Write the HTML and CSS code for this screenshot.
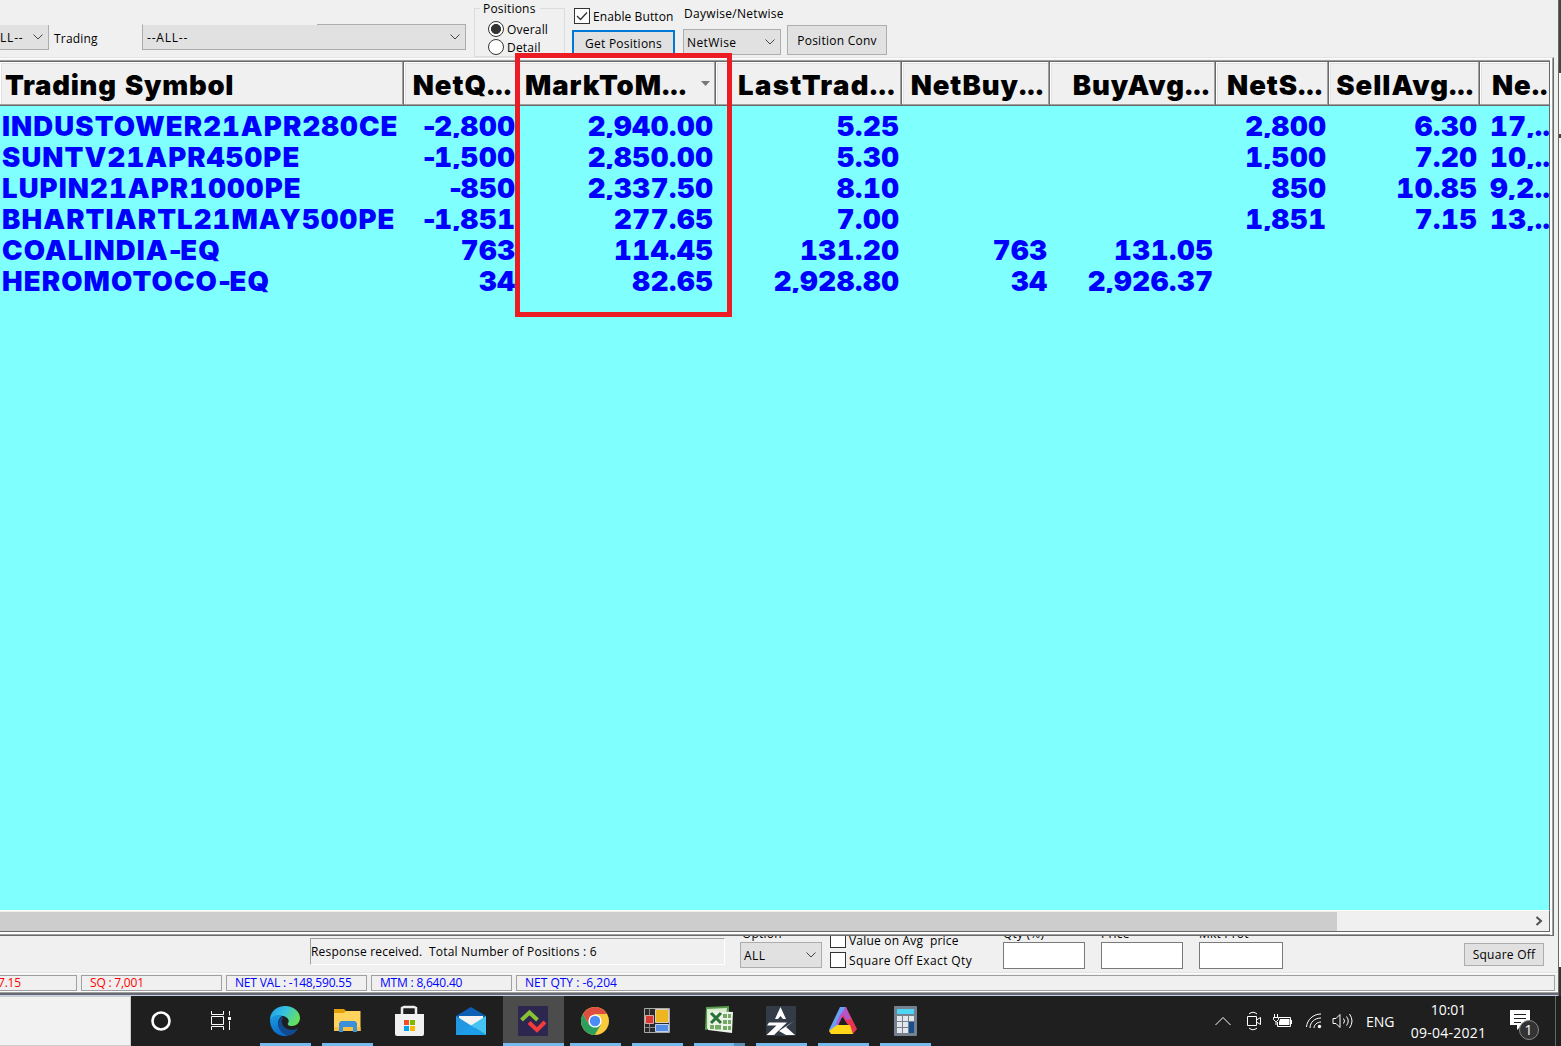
FILE: index.html
```html
<!DOCTYPE html>
<html lang="en">
<head>
    <meta charset="UTF-8">
    <title>Net Positions</title>
    <link rel="stylesheet" href="styles.css">
</head>
<body>
    <div class="window">
        <div class="toolbar">
            <div class="select cut-left"><span>LL--</span><svg class="chev" viewBox="0 0 10 6"><path d="M0.5 0.5 5 5 9.5 0.5"/></svg></div>
            <label class="trading">Trading</label>
            <div class="select symbol-select"><span>--ALL--</span><svg class="chev" viewBox="0 0 10 6"><path d="M0.5 0.5 5 5 9.5 0.5"/></svg></div>
            <div class="group">
                <div class="legend"><span>Positions</span></div>
                <div class="radio"><i class="dot on"></i><span>Overall</span></div>
                <div class="radio"><i class="dot"></i><span>Detail</span></div>
            </div>
            <div class="get-col">
                <div class="check"><i class="box"><svg viewBox="0 0 14 14"><path d="M2 7 5.500 10.500 12 3.500"/></svg></i><span>Enable Button</span></div>
                <div class="button primary"><span>Get Positions</span></div>
            </div>
            <div class="wise-col">
                <label><span>Daywise/Netwise</span></label>
                <div class="select"><span>NetWise</span><svg class="chev" viewBox="0 0 10 6"><path d="M0.5 0.5 5 5 9.5 0.5"/></svg></div>
            </div>
            <div class="button conv"><span>Position Conv</span></div>
        </div>

        <div class="list">
            <table class="positions">
                <thead>
                    <tr>
                        <th class="left"><span>Trading Symbol</span></th>
                        <th><span>NetQ...</span></th>
                        <th class="sorted"><span>MarkToM...</span><i class="arrow"></i></th>
                        <th class="ltp"><span>LastTrad...</span></th>
                        <th><span>NetBuy...</span></th>
                        <th><span>BuyAvg...</span></th>
                        <th><span>NetS...</span></th>
                        <th><span>SellAvg...</span></th>
                        <th class="last"><span>Ne...</span></th>
                    </tr>
                </thead>
                <tbody>
                    <tr><td>INDUSTOWER21APR280CE</td><td><i>-</i>2,800</td><td>2,940.00</td><td>5.25</td><td></td><td></td><td>2,800</td><td>6.30</td><td>17,...</td></tr>
                    <tr><td>SUNTV21APR450PE</td><td><i>-</i>1,500</td><td>2,850.00</td><td>5.30</td><td></td><td></td><td>1,500</td><td>7.20</td><td>10,...</td></tr>
                    <tr><td>LUPIN21APR1000PE</td><td><i>-</i>850</td><td>2,337.50</td><td>8.10</td><td></td><td></td><td>850</td><td>10.85</td><td>9,2...</td></tr>
                    <tr><td>BHARTIARTL21MAY500PE</td><td><i>-</i>1,851</td><td>277.65</td><td>7.00</td><td></td><td></td><td>1,851</td><td>7.15</td><td>13,...</td></tr>
                    <tr><td>COALINDIA<i>-</i>EQ</td><td>763</td><td>114.45</td><td>131.20</td><td>763</td><td>131.05</td><td></td><td></td><td></td></tr>
                    <tr><td>HEROMOTOCO<i>-</i>EQ</td><td>34</td><td>82.65</td><td>2,928.80</td><td>34</td><td>2,926.37</td><td></td><td></td><td></td></tr>
                </tbody>
            </table>
            <div class="scrollbar">
                <div class="thumb"></div>
                <svg viewBox="0 0 8 10"><path d="M1.500 1 6 5 1.500 9"/></svg>
            </div>
        </div>

        <div class="actions">
            <div class="response"><span>Response received.&nbsp; Total Number of Positions : 6</span></div>
            <div class="field option">
                <label><span>Option</span></label>
                <div class="select"><span>ALL</span><svg class="chev" viewBox="0 0 10 6"><path d="M0.5 0.5 5 5 9.5 0.5"/></svg></div>
            </div>
            <div class="checks">
                <div class="check"><i class="box"></i><span>Value on Avg&nbsp; price</span></div>
                <div class="check exact"><i class="box"></i><span>Square Off Exact Qty</span></div>
            </div>
            <div class="field qty"><label><span>Qty (%)</span></label><div class="input"></div></div>
            <div class="field price"><label><span>Price</span></label><div class="input"></div></div>
            <div class="field prot"><label><span>Mkt Prot</span></label><div class="input"></div></div>
            <div class="button square"><span>Square Off</span></div>
        </div>

        <div class="statusbar">
            <div class="panel first red"><span>7.15</span></div>
            <div class="panel red"><span>SQ : 7,001</span></div>
            <div class="panel"><span>NET VAL : -148,590.55</span></div>
            <div class="panel"><span>MTM : 8,640.40</span></div>
            <div class="panel rest"><span>NET QTY : -6,204</span></div>
        </div>
        <div class="highlight"></div>
    </div>

    <div class="taskbar">
        <div class="search"></div>
        <div class="task cortana"><svg viewBox="0 0 32 32"><circle cx="16" cy="16" r="8.500" fill="none" stroke="#fff" stroke-width="2.600"/></svg></div>
        <div class="task view"><svg viewBox="0 0 32 32"><path d="M6.500 6v3.500h12V6M6.500 25v-3.500h12V25M6.500 11.500h12v8h-12zM24.500 6v4.500M24.500 16v9" fill="none" stroke="#fff"/><path d="M23 12h3v3h-3z" fill="#fff"/></svg></div>
        <div class="task open">
            <svg viewBox="0 0 32 32">
                <defs>
                    <linearGradient id="edgeTop" x1="0" y1="0" x2="1" y2="0.4"><stop offset="0" stop-color="#1a9de0"/><stop offset="0.5" stop-color="#35c1e6"/><stop offset="1" stop-color="#64e060"/></linearGradient>
                    <linearGradient id="edgeLow" x1="0" y1="0" x2="0.3" y2="1"><stop offset="0" stop-color="#1b9de2"/><stop offset="1" stop-color="#0b6cc9"/></linearGradient>
                </defs>
                <path d="M1 15C1 7 7 1 16 1c9 0 15 6 15 12 0 5-4 8-8 8-3 0-5-1-4-3 2-2 0-6-5-7-6-1-11 1-13 4z" fill="url(#edgeTop)"/>
                <path d="M1 15c2-5 8-6 12-4-3 2-4 5-4 8 1 6 6 11 11 11-2 1-4 1-6 1C6 30 1 23 1 15z" fill="url(#edgeLow)"/>
                <path d="M13 12c-3 3-4 5-4 8 1 6 7 12 13 10 3-1 6-4 7-7-6 4-15 1-16-5-1-2 0-4 1-5z" fill="#114a91"/>
            </svg>
        </div>
        <div class="task open">
            <svg viewBox="0 0 32 32"><path d="M3 4h10l2 2v4H3z" fill="#e3a008"/><path d="M3 8h10l2-2h14.500v20H3z" fill="#ffd35c"/><path d="M3 22h26.500v4H3z" fill="#f6c142"/><path d="M8 27V18l2-2h14l2 2v9h-4v-5H12v5z" fill="#3c8fd9"/></svg>
        </div>
        <div class="task">
            <svg viewBox="0 0 32 32"><path d="M9 10V3l2-1h10l2 1v7" fill="none" stroke="#eee" stroke-width="2.500"/><path d="M2 9h29v20q0 2-2 2H4q-2 0-2-2z" fill="#f1f1f1"/><path d="M11 15h5v5h-5z" fill="#f25022"/><path d="M17 15h5v5h-5z" fill="#7fba00"/><path d="M11 21h5v5h-5z" fill="#00a4ef"/><path d="M17 21h5v5h-5z" fill="#ffb900"/></svg>
        </div>
        <div class="task">
            <svg viewBox="0 0 32 32"><path d="M1 11 16 2l15 9v4H1z" fill="#0b5fb4"/><path d="M4 11h24v8l-11 5L4 16z" fill="#f3f3f3"/><path d="M1 11 31 30H1z" fill="#2197e3"/><path d="M31 11 16 20.500 31 30z" fill="#45c4f4"/><path d="M1 30 16 20.500 31 30z" fill="#1d9ee9"/></svg>
        </div>
        <div class="task active">
            <svg viewBox="0 0 32 32"><rect x="1" y="1" width="30" height="30" rx="1" fill="#2d2750"/><path d="m4.500 15 8-7.500 8 7.500" fill="none" stroke="#86c232" stroke-width="4"/><path d="m12 17.500 8 7.500 8-8" fill="none" stroke="#f43a3a" stroke-width="4"/></svg>
        </div>
        <div class="task open">
            <svg viewBox="0 0 32 32"><circle cx="16" cy="16" r="14" fill="#fbc93c"/><path d="M3.900 9A14 14 0 0 1 28.100 9H16L9.900 19.500z" fill="#df4f41"/><path d="M3.900 9A14 14 0 0 0 15.700 30L22 19.500 9.900 19.500z" fill="#2b9f5d"/><circle cx="16" cy="16" r="6.600" fill="#fff"/><circle cx="16" cy="16" r="5.200" fill="#4b8cf5"/></svg>
        </div>
        <div class="task open">
            <svg viewBox="0 0 32 32"><path d="M3.500 3.500h25v24h-25z" fill="#292929" stroke="#aaa"/><path d="M14.500 4.500h13v13h-13z" fill="#edb51f" stroke="#d9d2b8"/><path d="M4.500 10.500h8v8h-8z" fill="#d93a32" stroke="#d8aaa7"/><path d="M14.500 19.500h13v7h-13z" fill="#558ce4" stroke="#bed0ed"/><path d="M8.500 4v6M8.500 19v8M4 22.500h10" stroke="#888"/></svg>
        </div>
        <div class="task open grouped">
            <svg viewBox="0 0 32 32"><path d="m3 2 23-1v20L2 25z" fill="#579c4d"/><path d="m4 4 20-1-2 12-18 9z" fill="#d8edcc"/><path d="m7 6 23 1-1 21-24-3z" fill="#eef3e9"/><path d="M20 9h4v4h-4zM25 9h3v4h-3zM20 15h4v4h-4zM25 15h3v4h-3zM7 20h4v4H7zM12 20h6v4.500h-6zM20 21h4v4h-4zM25 21h3v4h-3z" fill="#73aa64"/><path d="m8 8 10 10M18 8 8 18" stroke="#287235" stroke-width="3"/></svg>
        </div>
        <div class="task open">
            <svg viewBox="0 0 32 32"><path d="M1 1h30v30H1z" fill="#333b46"/><path d="m15.500 2 5.500 12h-3l-2.500-3-2.500 3h-3zM4 17.500h18L9 30H1.500l10-9.500H2zM29 16l-8 6 9 8h-9l-7-4z" fill="#fff"/></svg>
        </div>
        <div class="task open">
            <svg viewBox="0 0 32 32"><path d="M13 2h6l-8 17 2 3-10 5-1-2z" fill="#6a9ff5"/><path d="M19 2 30 24l-4 5-4-8-8-10z" fill="#e83453"/><path d="M13 10 19 2l5 12-5 1-3-5-5 11-2-2z" fill="#b456c8"/><path d="m16 12 4 8h-8z" fill="#1f1f1f"/><path d="m2 26 8-6h13l3 9H4z" fill="#ffd718"/></svg>
        </div>
        <div class="task open">
            <svg viewBox="0 0 32 32"><rect x="5" y="1" width="23" height="30" rx="1" fill="#75818e"/><path d="M8 4h17v5H8z" fill="#4dd5f6"/><path d="M8 11h5v5H8zM14 11h5v5h-5zM20 11h5v5h-5zM8 17h5v5H8zM14 17h5v5h-5zM8 23h5v5H8zM14 23h5v5h-5z" fill="#e3e7ec"/><path d="M20 17h5v11h-5z" fill="#164e8e"/></svg>
        </div>

        <div class="tray">
            <svg class="t-up" viewBox="0 0 16 10"><path d="M0.500 9 8 1.500 15.500 9"/></svg>
            <svg class="t-cam" viewBox="0 0 16 20"><path d="M3 3Q7 -0.500 11 3M3 17Q7 20.500 11 17M1.500 5.500h9v9h-9zM10.500 9 14.500 6.500v7L10.500 11"/></svg>
            <svg class="t-bat" viewBox="0 0 20 14"><path d="M6 3.500h11.500v9H4.500V8M18.500 6v4M1.500 0v3M4.500 0v3M0.500 3.500h5v2l-2 2h-1l-2-2zM3 7v4"/><path class="fill" d="M7 5h9.500v6H6V8z"/></svg>
            <svg class="t-wifi" viewBox="0 0 16 16"><path d="M0.500 14C1 7 7 1 15 1M4 15C4 9 9 5 15 5M8 15c0-3 3-6 7-6"/><circle class="fill" cx="13.500" cy="13.500" r="1.700"/></svg>
            <svg class="t-vol" viewBox="0 0 22 18"><path d="M1 6.500h3l4-4v13l-4-4H1zM11.500 6.500q2 2.500 0 5M14.500 4.500q3.500 4.500 0 9M17.500 2q5 7 0 14"/></svg>
            <span class="lang">ENG</span>
            <div class="clock"><span>10:01</span><span class="date">09-04-2021</span></div>
            <div class="notify">
                <svg viewBox="0 0 20 20"><path d="M0 0h20v15h-8l-5 5v-5H0z" fill="#fff"/><path d="M4 4.500h12M4 8.500h12M4 12.500h7" stroke="#1f1f1f"/></svg>
                <i class="count">1</i>
            </div>
        </div>
    </div>
</body>
</html>
```

FILE: styles.css
```css
* {
    box-sizing: border-box;
}

body {
    margin: 0;
    width: 1561px;
    height: 1046px;
    overflow: hidden;
    display: flex;
    flex-direction: column;
    background: #1f1f1f;
    font-family: "Open Sans", "Noto Sans", sans-serif;
    font-size: 12px;
    letter-spacing: 0.2px;
    color: #000;
}

span {
    white-space: nowrap;
}

.window {
    position: relative;
    height: 996px;
    display: flex;
    flex-direction: column;
    background: #f0f0f0;
}

/* right window frame */
.window::after {
    content: "";
    position: absolute;
    top: 0;
    right: 0;
    width: 2px;
    height: 100%;
    border-left: 1px solid #696969;
    background: linear-gradient(#444 73px, #fff 73px 134px, #444 134px 138px, #fff 138px 967px, #333 967px);
}

/* toolbar */
.toolbar {
    display: flex;
    align-items: flex-start;
    height: 57px;
}

.select {
    display: flex;
    align-items: center;
    justify-content: space-between;
    height: 26px;
    padding: 0 5px 0 4px;
    background: #e1e1e1;
    border: 1px solid #adadad;
    letter-spacing: 0.4px;
}

.chev {
    width: 10px;
    height: 6px;
    fill: none;
    stroke: #444;
}

.cut-left {
    width: 49px;
    height: 25px;
    margin-top: 25px;
    padding-left: 0;
    border-width: 0 1px 1px 0;
    letter-spacing: 0.8px;
}

.trading {
    width: 88px;
    margin: 30px 0 0 5px;
}

.symbol-select {
    width: 324px;
    margin-top: 24px;
    border-top-color: transparent;
    background: linear-gradient(#adadad, #adadad) 175px 0 / 149px 1px no-repeat border-box, linear-gradient(#f0f0f0, #f0f0f0) 0 0 / 175px 1px no-repeat border-box, #e1e1e1;
    letter-spacing: 0.8px;
}

.group {
    width: 91px;
    height: 49px;
    margin: 8px 0 0 8px;
    border: 1px solid #dcdcdc;
}

.legend {
    width: 60px;
    height: 12px;
    margin: -8px 0 0 5px;
    padding-left: 3px;
    background: #f0f0f0;
    line-height: 16px;
}

.radio {
    display: flex;
    align-items: center;
    gap: 3px;
    height: 18px;
    margin-left: 13px;
}

.legend + .radio {
    margin-top: 7px;
}

.dot {
    width: 16px;
    height: 16px;
    border: 1px solid #333;
    border-radius: 50%;
    background: #fff;
}

.dot.on {
    background: radial-gradient(circle, #333 0 4.7px, #fff 5.3px);
}

.get-col {
    width: 103px;
    margin: 8px 0 0 7px;
}

.check {
    display: flex;
    align-items: center;
    gap: 3px;
    height: 16px;
}

.get-col .check {
    margin-left: 2px;
    letter-spacing: 0.1px;
}

.box {
    flex: none;
    width: 16px;
    height: 16px;
    border: 1px solid #333;
    background: #fff;
}

.box svg {
    display: block;
    fill: none;
    stroke: #333;
    stroke-width: 1.3;
}

.button {
    display: flex;
    align-items: center;
    justify-content: center;
    background: #e1e1e1;
    border: 1px solid #adadad;
    letter-spacing: 0.25px;
}

.primary {
    height: 27px;
    margin-top: 6px;
    border: 2px solid #0078d7;
}

.wise-col {
    width: 98px;
    margin: 5px 0 0 8px;
}

.wise-col label {
    display: block;
    height: 24px;
    margin-left: 1px;
    letter-spacing: 0.3px;
}

.wise-col .select {
    padding-left: 3px;
}

.conv {
    width: 100px;
    height: 30px;
    margin: 25px 0 0 6px;
}

/* position grid */
.list {
    width: 1554px;
    height: 879px;
    border-top: 1px solid #e3e3e3;
    border-right: 1px solid #696969;
    border-bottom: 1px solid #696969;
    box-shadow: inset -1px 0 #a0a0a0, inset 0 1px #fff, inset -3px 0 #fff, inset 0 -1px #a0a0a0, inset 0 -3px #fff;
    padding: 2px 3px 3px 0;
    display: flex;
    flex-direction: column;
}

.list::before {
    content: "";
    height: 2px;
    width: 1550px;
    flex: none;
    background: linear-gradient(#a0a0a0 50%, #696969 50%);
}

.positions {
    display: block;
    flex: 1;
    width: 1550px;
    overflow: hidden;
    background: #80ffff;
    border-right: 1px solid #696969;
    font-family: Inter, "Liberation Sans", sans-serif;
    font-weight: 900;
    font-size: 27.5px;
    font-feature-settings: "tnum";
}

.positions thead,
.positions tbody {
    display: block;
    width: 1600px;
}

.positions tr {
    display: grid;
    grid-template-columns: 404px 114px 198px 186px 148px 166px 113px 151px 120px;
}

.positions th {
    display: flex;
    justify-content: flex-end;
    height: 44px;
    padding: 0 5px 0 6px;
    line-height: 46px;
    background: #f0f0f0;
    border-right: 1px solid #696969;
    border-bottom: 1px solid #696969;
    box-shadow: inset -1px -1px #a0a0a0, inset 1px 1px #fff, inset 2px 2px #e3e3e3;
    overflow: hidden;
    font-weight: 900;
    letter-spacing: 0.95px;
}

.positions th.left {
    justify-content: flex-start;
    padding-left: 5px;
    letter-spacing: 0.75px;
}

.positions th.last {
    justify-content: flex-start;
    padding-left: 12px;
}

.positions th.ltp {
    letter-spacing: 1.35px;
}

.arrow {
    width: 9px;
    height: 5px;
    margin: 19px 0 0 14px;
    background: #777;
    clip-path: polygon(0 0, 100% 0, 50% 100%);
}

.positions tbody {
    padding-top: 4px;
    color: #00f;
}

.positions td {
    height: 28px;
    margin-bottom: 3px;
    padding: 0 2.4px 0 0;
    line-height: 32px;
    letter-spacing: 0.6px;
    text-align: right;
    white-space: nowrap;
    overflow: hidden;
}

.positions td i {
    font-style: normal;
    font-feature-settings: normal;
    letter-spacing: -1.5px;
}

.positions td:first-child {
    padding-left: 2px;
    letter-spacing: 1.1px;
    text-align: left;
}

.positions td:last-child {
    padding-left: 10px;
    text-align: left;
}

.scrollbar {
    display: flex;
    align-items: center;
    justify-content: space-between;
    flex: none;
    width: 1550px;
    height: 22px;
    padding-right: 6px;
    border-top: 1px solid #fff;
    border-right: 1px solid #696969;
    border-bottom: 1px solid #696969;
}

.thumb {
    width: 1337px;
    height: 19px;
    background: #cdcdcd;
}

.scrollbar svg {
    width: 8px;
    height: 10px;
    fill: none;
    stroke: #505050;
    stroke-width: 2;
}

.highlight {
    position: absolute;
    left: 515px;
    top: 53px;
    width: 217px;
    height: 264px;
    border: 5px solid #ed1c24;
}

/* order actions */
.actions {
    display: flex;
    align-items: flex-start;
    height: 36px;
    overflow: hidden;
}

.response {
    width: 415px;
    height: 27px;
    margin: 2px 0 0 310px;
    border: 1px solid;
    border-color: #a0a0a0 #fff #fff #a0a0a0;
    line-height: 26px;
}

.field {
    width: 82px;
    margin: -10px 0 0 16px;
}

.field label {
    display: block;
    height: 16px;
    line-height: 16px;
}

.option {
    margin-left: 15px;
}

.option label {
    padding-left: 2px;
}

.option .select {
    padding-left: 3px;
}

.input {
    height: 27px;
    background: #fff;
    border: 1px solid #7a7a7a;
}

.checks {
    width: 157px;
    margin: -4px 0 0 8px;
}

.checks .check + .check {
    margin-top: 4px;
}

.exact {
    letter-spacing: 0.37px;
}

.prot {
    width: 84px;
}

.square {
    width: 80px;
    height: 23px;
    margin: 7px 0 0 181px;
}

/* totals */
.statusbar {
    display: flex;
    gap: 4px;
    height: 24px;
    padding-top: 3px;
    background: linear-gradient(#e3e3e3 0 1px, #fff 1px 2px, #f0f0f0 2px 19px, #fff 19px 20px, #a0a0a0 20px 21px, #696974 21px 23px, #c5d3ea 23px);
}

.panel {
    width: 141px;
    height: 16px;
    padding-left: 8px;
    border: 1px solid #a0a0a0;
    line-height: 14px;
    letter-spacing: -0.2px;
    color: #00f;
}

.panel.first {
    width: 77px;
    padding: 0;
    border-left: none;
    text-indent: -2px;
}

.panel.rest {
    width: 1039px;
    letter-spacing: 0;
}

.panel.red {
    color: #f00;
}

/* taskbar */
.taskbar {
    display: flex;
    height: 50px;
    background: #1f1f1f;
    color: #fff;
}

.search {
    width: 131px;
    background: #f2f2f2;
    border: 1px solid #ccc;
    border-left: none;
}

.task {
    display: flex;
    justify-content: center;
    width: 62px;
    padding-top: 9px;
}

.task svg {
    width: 32px;
    height: 32px;
}

.task.cortana {
    width: 60px;
}

.task.view {
    width: 63px;
    padding-right: 3px;
}

.task.open {
    background: linear-gradient(#76b9ed, #76b9ed) 6px 47px / 51px 3px no-repeat;
}

.task.grouped {
    background: linear-gradient(90deg, #76b9ed 40px, #5b8db5 40px) 6px 47px / 51px 3px no-repeat;
}

.task.active {
    background: linear-gradient(#76b9ed, #76b9ed) 1px 47px / 61px 3px no-repeat, linear-gradient(#4c4c4c, #4c4c4c) 1px 0 / 61px 47px no-repeat;
}

.tray {
    display: flex;
    align-items: center;
    width: 341px;
    margin-left: auto;
    margin-right: 5px;
    border-right: 1px solid #666;
    font-size: 14px;
    letter-spacing: 0;
}

.tray svg {
    flex: none;
    fill: none;
    stroke: #fff;
}

.tray .fill {
    fill: #fff;
    stroke: none;
}

.t-up {
    width: 16px;
    height: 10px;
}

.t-cam {
    width: 16px;
    height: 20px;
    margin-left: 15px;
}

.t-bat {
    width: 20px;
    height: 14px;
    margin-left: 11px;
}

.t-wifi {
    width: 16px;
    height: 16px;
    margin-left: 13px;
}

.t-vol {
    width: 22px;
    height: 18px;
    margin-left: 10px;
}

.lang {
    margin-left: 12px;
}

.clock {
    display: flex;
    flex-direction: column;
    align-items: center;
    width: 76px;
    margin-left: 16px;
    line-height: 23px;
}

.date {
    letter-spacing: 0.25px;
}

.notify {
    position: relative;
    margin-left: 23px;
    margin-top: -2px;
    height: 20px;
}

.notify svg {
    width: 20px;
    height: 20px;
    stroke: none;
}

.count {
    position: absolute;
    left: 9px;
    top: 10px;
    width: 20px;
    height: 20px;
    background: #333;
    border: 1px solid #888;
    border-radius: 50%;
    font-style: normal;
    line-height: 18px;
    text-align: center;
}
```
